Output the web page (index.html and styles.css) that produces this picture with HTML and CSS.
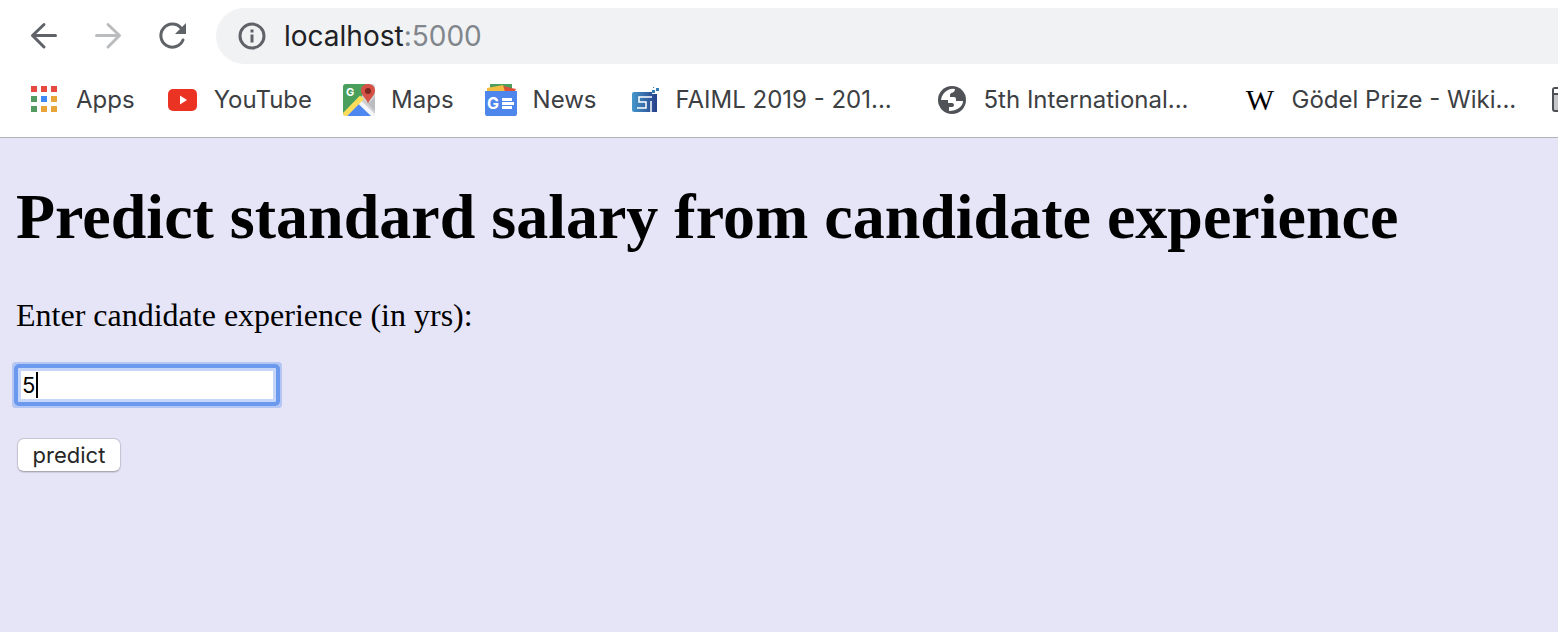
FILE: index.html
```html
<!DOCTYPE html>
<html lang="en">
<head>
<meta charset="utf-8">
<title>localhost:5000</title>
<link rel="stylesheet" href="styles.css">
</head>
<body>
<header class="browser">
  <div class="toolbar">
    <button class="nav-button" type="button" aria-label="Back">
      <svg width="32" height="32" viewBox="0 0 32 32" fill="none" stroke="#5f6368" stroke-width="3" stroke-linecap="round" stroke-linejoin="round"><path d="M27.500 15.500H4.500M16 4.500L4.500 15.500L16 27"/></svg>
    </button>
    <button class="nav-button" type="button" aria-label="Forward">
      <svg width="32" height="32" viewBox="0 0 32 32" fill="none" stroke="#babcbe" stroke-width="3" stroke-linecap="round" stroke-linejoin="round"><path d="M4.500 15.500H27.500M16 4.500L27.500 15.500L16 27"/></svg>
    </button>
    <button class="nav-button" type="button" aria-label="Reload">
      <svg width="32" height="32" viewBox="0 0 32 32"><path d="M27 20A11.500 11.500 0 1 1 25 8" fill="none" stroke="#5f6368" stroke-width="3" stroke-linecap="round"/><path d="M30 3V14H19Z" fill="#5f6368"/></svg>
    </button>
    <div class="address">
      <svg width="28" height="28" viewBox="0 0 28 28"><circle cx="14" cy="14" r="12" fill="none" stroke="#5f6368" stroke-width="3"/><path d="M12.500 7.500h3v3h-3zM12.500 12.500h3v8h-3z" fill="#5f6368"/></svg>
      <span class="url">localhost<span class="port">:5000</span></span>
    </div>
  </div>
  <nav class="bookmarks" aria-label="Bookmarks">
    <a class="bookmark" href="#">
      <svg class="icon" viewBox="0 0 32 32"><path d="M3 2h6v6H3zM13 2h6v6h-6zM23 2h6v6h-6z" fill="#e64a3f"/><path d="M3 12h6v6H3zM3 22h6v6H3z" fill="#529b60"/><path d="M13 12h6v6h-6z" fill="#4089f5"/><path d="M23 12h6v6h-6zM13 22h6v6h-6zM23 22h6v6h-6z" fill="#e7a539"/></svg>
      <span>Apps</span>
    </a>
    <a class="bookmark" href="#">
      <svg class="icon" viewBox="0 0 32 32"><rect x="2" y="5" width="29" height="22" rx="5" fill="#ea3323"/><path d="M14 11.500L21 16L14 20.500Z" fill="#fff"/></svg>
      <span>YouTube</span>
    </a>
    <a class="bookmark" href="#">
      <svg class="icon" viewBox="0 0 32 32">
        <defs><clipPath id="map-tile"><rect width="32" height="32" rx="3"/></clipPath></defs>
        <g clip-path="url(#map-tile)">
          <rect width="32" height="32" fill="#d0d1d3"/>
          <path d="M0 0H24L19 12L0 31Z" fill="#4a9f5d"/>
          <path d="M4 32L16.500 19L29 32Z" fill="#4d87ef"/>
          <path d="M15 19.500L18 16.500L32 30V32H28Z" fill="#f5f6f7"/>
          <path d="M0 29L17 11.500L21 15L4 32H0Z" fill="#fbdc5b"/>
          <path d="M25 20L32 13V27Z" fill="#bbbdc0"/>
          <path d="M25 20C24.500 15 18 12 18 6.500C18 2.500 21 0 25 0S32 2.500 32 6.500C32 12 26 15 25 20Z" fill="#d65145"/>
          <circle cx="25" cy="7" r="3" fill="#7c2720"/>
          <text class="map-g" x="3" y="12">G</text>
        </g>
      </svg>
      <span>Maps</span>
    </a>
    <a class="bookmark" href="#">
      <svg class="icon" viewBox="0 0 32 32"><path d="M5 0H27V8H5Z" fill="#4d9f5e"/><path d="M18 2L31 5L29 9H17Z" fill="#dc4f38"/><path d="M2 4L18 1L20 8H2Z" fill="#f3bd42"/><path d="M0 7H32V30Q32 32 30 32H2Q0 32 0 30Z" fill="#4f86ec"/><path d="M17 14h10v3H17zM17 18h12v3H17zM17 22h10v3H17z" fill="#fff"/><text class="news-g" x="2" y="25">G</text></svg>
      <span>News</span>
    </a>
    <a class="bookmark bookmark-long" href="#">
      <svg class="icon" viewBox="0 0 32 32">
        <defs><linearGradient id="lst-blue"><stop stop-color="#4697cb"/><stop offset="1" stop-color="#27408a"/></linearGradient></defs>
        <path d="M6 8H24V10H29V28H6Q4 28 4 26V10Q4 8 6 8Z" fill="url(#lst-blue)"/>
        <path d="M24 13H11V18H18V24H9M23 17V28" fill="none" stroke="#fff" stroke-width="1.500"/>
        <path d="M24 6h3v3h-3zM28 4h3v3h-3zM25 3h1v1h-1z" fill="#347cb6"/>
      </svg>
      <span>FAIML 2019 - 201...</span>
    </a>
    <a class="bookmark bookmark-long" href="#">
      <svg class="icon" viewBox="0 0 32 32"><circle cx="16" cy="16" r="14" fill="#4f5257"/><path d="M5 16Q6 9 12 6Q16 4 19 5Q19 8 17 8.500Q14 9 14 11V13H18Q20 13 20 15V17H27Q27 21 23 24Q19 27 13 27V23H15Q18 23 18 21Q18 19 16 19H12V16Z" fill="#fff"/></svg>
      <span>5th International...</span>
    </a>
    <a class="bookmark bookmark-long" href="#">
      <svg class="icon" viewBox="0 0 32 32"><text class="wiki-w" x="16" y="26" text-anchor="middle">W</text></svg>
      <span>Gödel Prize - Wiki...</span>
    </a>
    <a class="bookmark" href="#" aria-label="More bookmarks">
      <svg class="icon" viewBox="0 0 32 32"><rect x="1" y="4" width="28" height="23" rx="2" fill="#c5c6c8" stroke="#4d5054" stroke-width="2"/><path d="M2 5H28V9H2Z" fill="#fff"/><path d="M2 10H28" stroke="#4d5054" stroke-width="2"/></svg>
    </a>
  </nav>
</header>
<main class="page">
  <h1>Predict standard salary from candidate experience</h1>
  <form>
    <label for="experience">Enter candidate experience (in yrs):</label>
    <div class="field">
      <input id="experience" name="experience" type="text" value="5">
      <span class="caret"></span>
    </div>
    <button class="predict" type="button">predict</button>
  </form>
</main>
</body>
</html>
```

FILE: styles.css
```css
* { box-sizing: border-box; }

body {
  margin: 0;
  min-height: 100vh;
  display: flex;
  flex-direction: column;
  overflow-x: hidden;
  background: #e6e5f8;
  color: #000;
  font-family: "Liberation Serif", "Times New Roman", serif;
}

.browser {
  background: #fff;
  border-bottom: 1px solid #b3b2b9;
  font-family: Inter, sans-serif;
  overflow: hidden;
}

.toolbar {
  display: flex;
  align-items: center;
  gap: 32px;
  height: 72px;
  padding-left: 28px;
}

.nav-button {
  flex: none;
  width: 32px;
  height: 32px;
  padding: 0;
  border: 0;
  background: none;
}

.nav-button svg { display: block; }

.address {
  flex: 1;
  display: flex;
  align-items: center;
  gap: 18px;
  height: 56px;
  margin-left: -4px;
  padding-left: 22px;
  border-radius: 28px 0 0 28px;
  background: #f1f2f4;
}

.url {
  font-size: 28px;
  line-height: 40px;
  color: #202124;
}

.port { color: #80868b; }

.bookmarks {
  display: flex;
  align-items: center;
  gap: 31px;
  height: 65px;
  padding: 0 0 9px 28px;
}

.bookmark {
  flex: none;
  display: flex;
  align-items: center;
  gap: 16px;
  color: #3c4043;
  font-size: 24px;
  line-height: 32px;
  white-space: nowrap;
  text-decoration: none;
}

.bookmark-long { width: 277px; }

.icon {
  flex: none;
  width: 32px;
  height: 32px;
}

.map-g {
  fill: #fff;
  font: bold 11px Inter, sans-serif;
}

.news-g {
  fill: #fff;
  font: bold 16px Inter, sans-serif;
}

.wiki-w {
  fill: #000;
  font: 30px "Liberation Serif", serif;
}

.page {
  flex: 1;
  padding: 42px 16px;
}

h1 {
  margin: 0 0 42px;
  font-size: 64px;
  line-height: 74px;
}

form {
  display: flex;
  flex-direction: column;
  align-items: flex-start;
}

label {
  font-size: 32px;
  line-height: 38px;
}

.field {
  position: relative;
  margin: 34px 0 0 2px;
}

#experience {
  display: block;
  width: 258px;
  height: 34px;
  padding: 1px;
  border: 3px solid #c5d6f8;
  outline: 4px solid #6a99ee;
  border-radius: 1px;
  box-shadow: 0 0 0 6px #b3c6f4;
  background: #fff;
  color: #000;
  font: 22px Inter, sans-serif;
}

.caret {
  position: absolute;
  left: 18px;
  top: 4px;
  width: 2px;
  height: 26px;
  background: #000;
}

.predict {
  width: 104px;
  height: 34px;
  margin: 36px 0 0 1px;
  padding: 0;
  border: 1px solid #c5c4d1;
  border-bottom-color: #aaa9b5;
  border-radius: 7px;
  background: #fff;
  box-shadow: 0 1px 1px #cccbd9;
  color: #262626;
  font: 22px Inter, sans-serif;
}
```
